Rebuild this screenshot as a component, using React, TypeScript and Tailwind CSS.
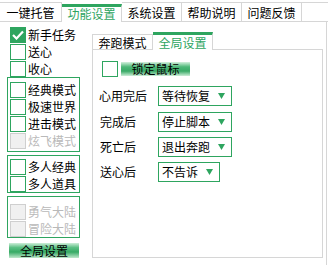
import React from 'react';

const GREEN = '#2ea55f';

type CheckProps = { label: string; checked?: boolean; disabled?: boolean };

function CheckRow({ label, checked, disabled }: CheckProps) {
  return (
    <div className="flex h-[17px] items-center gap-[2px]">
      {checked ? (
        <div className="flex h-[16px] w-[16px] items-center justify-center bg-[#2ea55f]">
          <svg width="12" height="10" viewBox="0 0 12 10">
            <path d="M1 5 L4.5 8.5 L11 1.5" stroke="#fff" strokeWidth="2.2" fill="none" />
          </svg>
        </div>
      ) : disabled ? (
        <div className="h-[16px] w-[16px] border border-[#cfcfcf] bg-[#f0f0f0]" />
      ) : (
        <div className="h-[16px] w-[16px] border border-[#2ea55f] bg-white" />
      )}
      <span className={`leading-[16px] ${disabled ? 'text-[#b9b9b9]' : 'text-black'}`}>{label}</span>
    </div>
  );
}

function Select({ value, width }: { value: string; width: string }) {
  return (
    <div className={`flex h-[20px] ${width} items-center justify-between border border-[#2ea55f] pl-[3px] pr-[6px]`}>
      <span className="leading-[16px]">{value}</span>
      <svg width="7" height="6" viewBox="0 0 7 6">
        <polygon points="0,0 7,0 3.5,6" fill={GREEN} />
      </svg>
    </div>
  );
}

const TOP_TABS = ['一键托管', '功能设置', '系统设置', '帮助说明', '问题反馈'];

export default function App() {
  return (
    <div className="h-[265px] w-[328px] overflow-hidden bg-white text-[12px] text-black [font-family:'Noto_Sans_CJK_SC',sans-serif]">
      {/* top tabs */}
      <div className="flex h-[22px] items-end">
        {TOP_TABS.map((t, i) =>
          i === 1 ? (
            <div
              key={t}
              className="flex h-[18px] w-[60px] items-center justify-center border-r border-t-[3px] border-r-[#d6d6d6] border-t-[#2ea55f] bg-white pb-[1px] text-[#2ea55f]"
            >
              {t}
            </div>
          ) : (
            <div
              key={t}
              className={`flex h-[20px] ${i === 0 ? 'w-[62px]' : 'w-[60px]'} items-center justify-center border-b border-r border-t border-[#d6d6d6] pt-[2px]`}
            >
              {t}
            </div>
          )
        )}
        <div className="h-[20px] flex-1 border-b border-t border-[#d6d6d6]" />
      </div>

      <div className="flex h-[243px] w-[327px] border-r border-[#d6d6d6]">
        {/* left column */}
        <div className="flex w-[92px] flex-col pt-[4px]">
          <div className="pl-[10px]">
            <CheckRow label="新手任务" checked />
            <CheckRow label="送心" />
            <CheckRow label="收心" />
          </div>
          <div className="ml-[7px] w-[73px] border border-[#2ea55f] pb-[2px] pl-[2px] pt-[3px]">
            <CheckRow label="经典模式" />
            <CheckRow label="极速世界" />
            <CheckRow label="进击模式" />
            <CheckRow label="炫飞模式" disabled />
          </div>
          <div className="ml-[7px] mt-[3px] w-[73px] border border-[#2ea55f] pl-[2px] pt-[2px]">
            <CheckRow label="多人经典" />
            <CheckRow label="多人道具" />
          </div>
          <div className="ml-[7px] mt-[3px] w-[73px] border border-[#2ea55f] pl-[2px] pt-[6px]">
            <CheckRow label="勇气大陆" disabled />
            <CheckRow label="冒险大陆" disabled />
          </div>
          <div className="ml-[9px] mt-[5px] flex h-[15px] w-[70px] items-center justify-center bg-[linear-gradient(to_bottom,#cdeed8_0%,#5cc084_30%,#37aa65_60%,#bfe8cc_100%)] leading-[14px]">
            全局设置
          </div>
        </div>

        {/* inner tabs panel */}
        <div className="mt-[10px] flex w-[231px] flex-col">
          <div className="flex h-[17px] items-end">
            <div className="flex h-[15px] w-[61px] items-center justify-center border-l border-t border-r border-[#d6d6d6] pt-[1px]">
              奔跑模式
            </div>
            <div className="relative z-10 -mb-[1px] flex h-[18px] w-[60px] items-center justify-center border-r border-t-[3px] border-r-[#d6d6d6] border-t-[#2ea55f] bg-white text-[#2ea55f]">
              全局设置
            </div>
          </div>
          <div className="flex h-[209px] flex-col border border-[#d6d6d6]">
            <div className="flex items-center pl-[9px] pt-[11px]">
              <div className="h-[16px] w-[16px] border border-[#2ea55f] bg-white" />
              <div className="ml-[3px] flex h-[14px] w-[69px] items-center justify-center bg-[linear-gradient(to_bottom,#d4f0dd_0%,#4cb877_35%,#3aaa67_65%,#cdeed8_100%)] leading-[14px]">
                锁定鼠标
              </div>
            </div>
            <div className="mt-[9px] flex flex-col gap-[5px] pl-[6px]">
              <div className="flex items-center">
                <span className="w-[59px]">心用完后</span>
                <Select value="等待恢复" width="w-[74px]" />
              </div>
              <div className="mt-[1px] flex items-center">
                <span className="w-[59px] pl-[1px]">完成后</span>
                <Select value="停止脚本" width="w-[74px]" />
              </div>
              <div className="flex items-center">
                <span className="w-[59px] pl-[1px]">死亡后</span>
                <Select value="退出奔跑" width="w-[74px]" />
              </div>
              <div className="flex items-center">
                <span className="w-[59px] pl-[1px]">送心后</span>
                <Select value="不告诉" width="w-[62px]" />
              </div>
            </div>
          </div>
        </div>
      </div>
    </div>
  );
}
